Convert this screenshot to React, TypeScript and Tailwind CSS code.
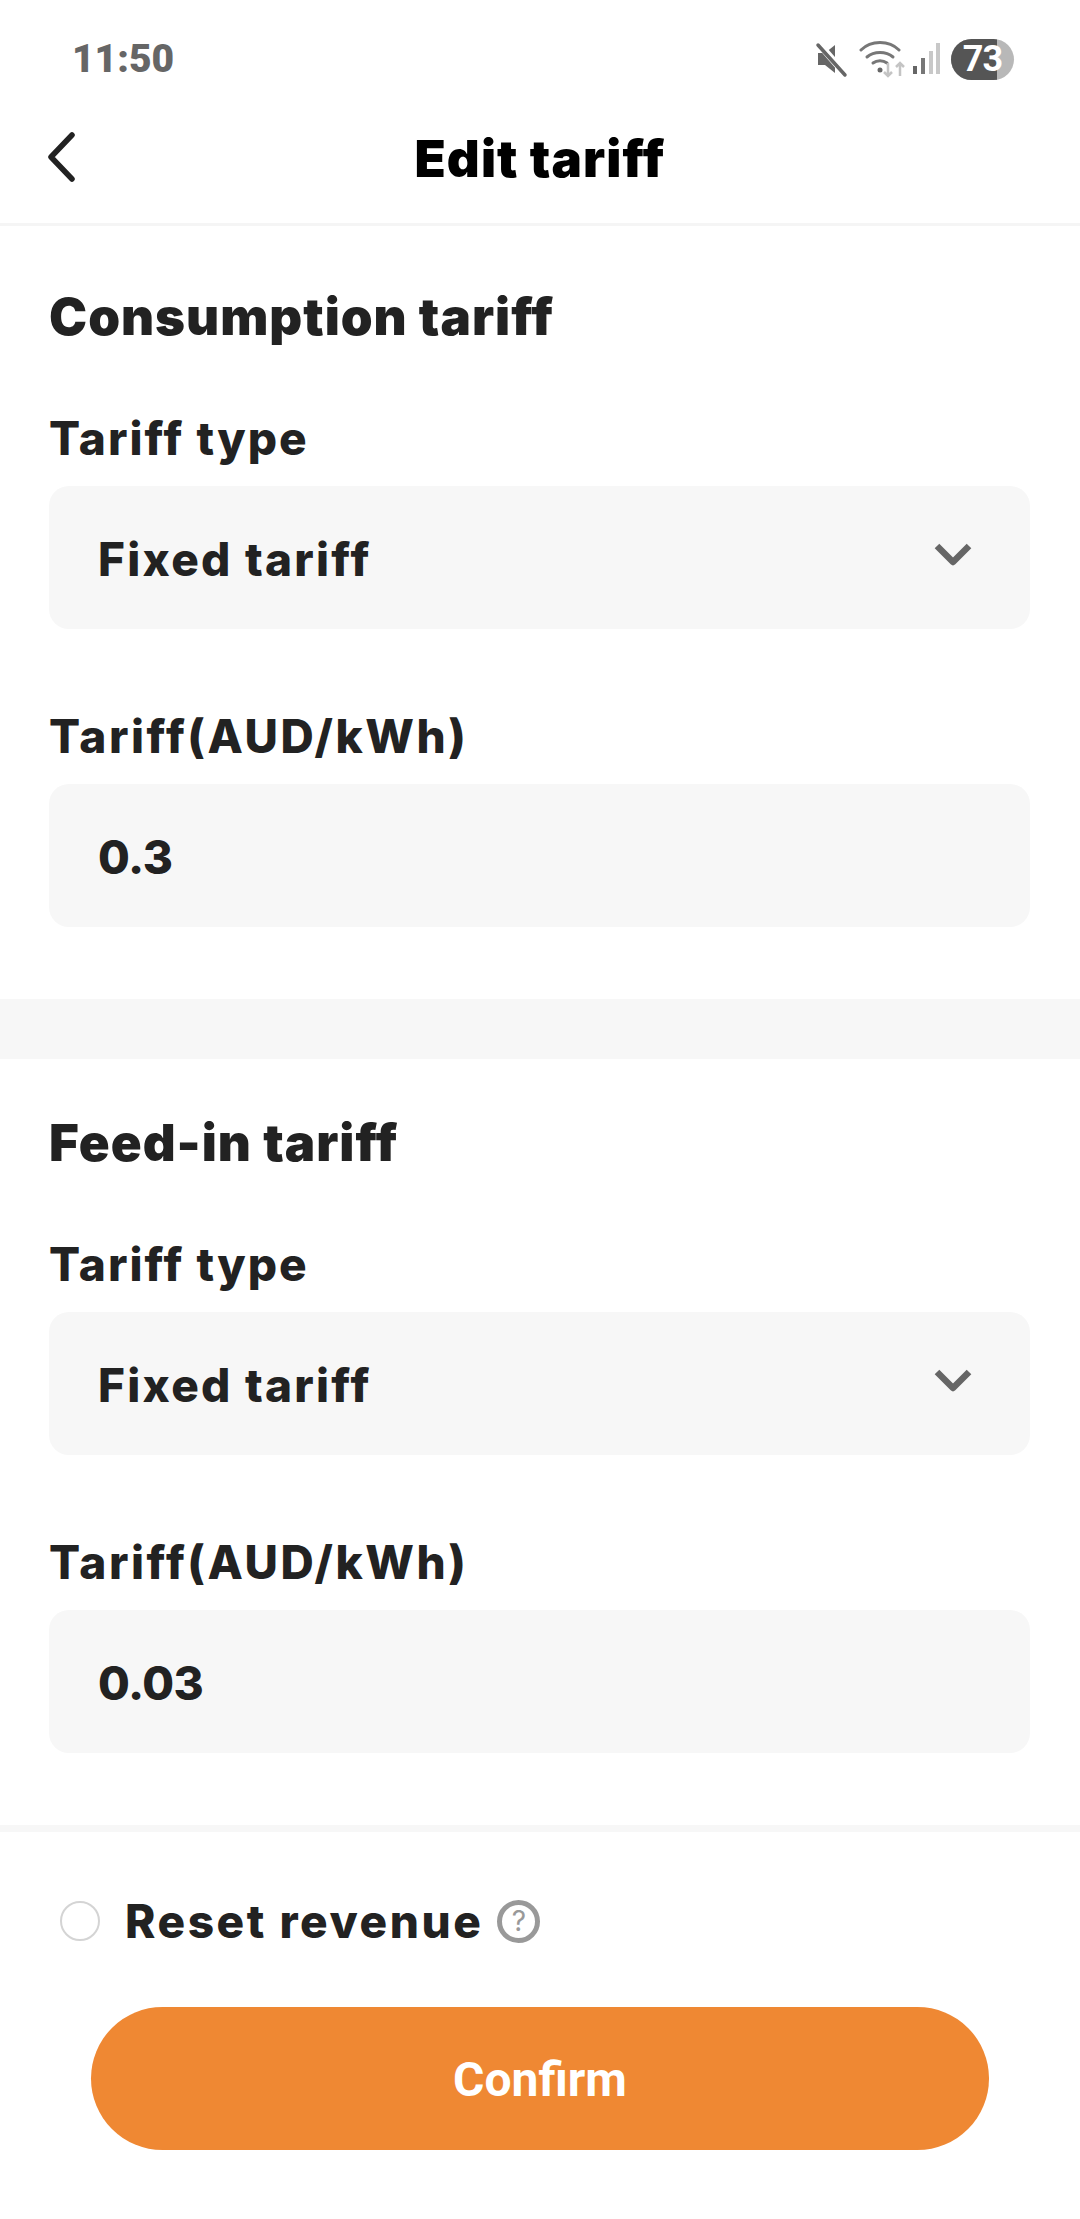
import React from 'react';

const sections = [
  { title: 'Consumption tariff', value: '0.3', top: 'pt-[65px]' },
  { title: 'Feed-in tariff', value: '0.03', top: 'pt-[58px]' },
];

const StatusIcons = () => (
  <div className="flex items-center">
    <svg width="36" height="40" viewBox="0 0 36 40" className="mr-[8px]">
      <path d="M3 14h7l10-8v28l-10-8H3z" fill="#666" />
      <path d="M4 5l27 31" stroke="#fff" strokeWidth="7" />
      <path d="M3 6l27 30" stroke="#666" strokeWidth="3.5" strokeLinecap="round" />
    </svg>
    <svg width="46" height="40" viewBox="0 0 46 40">
      <path d="M2 11C12 1 30 1 40 11" stroke="#777" strokeWidth="3" fill="none" strokeLinecap="round" />
      <path d="M8 18c7-6 19-6 26 0" stroke="#777" strokeWidth="3" fill="none" strokeLinecap="round" />
      <path d="M14 24c4-3 10-3 14 0" stroke="#777" strokeWidth="3" fill="none" strokeLinecap="round" />
      <circle cx="21" cy="31" r="2.5" fill="#666" />
      <path d="M29 24v13M25 33l4 4 4-4" stroke="#c4c4c4" strokeWidth="2.5" fill="none" />
      <path d="M41 37V24M37 28l4-4 4 4" stroke="#c4c4c4" strokeWidth="2.5" fill="none" />
    </svg>
    <svg width="30" height="34" viewBox="0 0 30 34" className="ml-[7px]">
      <rect x="1" y="24" width="4" height="8" fill="#666" />
      <rect x="9" y="16" width="4" height="16" fill="#777" />
      <rect x="17" y="9" width="4" height="23" fill="#c8c8c8" />
      <rect x="24" y="1" width="4" height="31" fill="#c8c8c8" />
    </svg>
    <div className="relative ml-[9px] flex h-[41px] w-[63px] items-center justify-center overflow-hidden rounded-full bg-[#b8b8b8]">
      <div className="absolute inset-y-0 left-0 w-[46px] bg-[#555555]" />
      <span className="relative font-['Roboto',sans-serif] text-[36px] font-bold tracking-[-1px] text-white">73</span>
    </div>
  </div>
);

const Field = ({ label, children, gapTop }: { label: string; children: React.ReactNode; gapTop?: boolean }) => (
  <div className={gapTop ? 'mt-[92px]' : ''}>
    <div className={`mb-[33px] h-[30px] text-[46px] leading-[30px] font-extrabold text-[#222222] ${gapTop ? 'tracking-[2.55px]' : 'tracking-[2.05px]'}`}>
      {label}
    </div>
    <div className="flex h-[143px] items-center justify-between rounded-[20px] bg-[#f7f7f7] pt-[3px] pr-[57px] pl-[49px] text-[46px] font-extrabold text-[#222222]">
      {children}
    </div>
  </div>
);

export default function App() {
  return (
    <div className="flex h-[2219px] w-[1080px] flex-col overflow-hidden bg-white font-['Inter',sans-serif]">
      <div className="flex h-[118px] items-center justify-between pr-[66px] pl-[72px]">
        <span className="font-['Roboto',sans-serif] text-[39px] font-black text-[#666666]">11:50</span>
        <StatusIcons />
      </div>

      <div className="relative flex h-[108px] items-center justify-center border-b-[3px] border-[#f5f5f5] pb-[24px]">
        <svg width="30" height="50" viewBox="0 0 30 50" className="absolute top-[14px] left-[46px]">
          <path d="M26 3L5 25l21 22" stroke="#222" strokeWidth="5.5" fill="none" strokeLinecap="round" strokeLinejoin="round" />
        </svg>
        <h1 className="text-[51px] leading-[60px] font-black tracking-[1.1px] text-black">Edit tariff</h1>
      </div>

      {sections.map((section, index) => (
        <React.Fragment key={section.title}>
          {index > 0 && <div className="h-[60px] bg-[#f7f7f7]" />}
          <section className={`pr-[50px] pb-[72px] pl-[49px] ${section.top}`}>
            <h2 className="mb-[82px] h-[50px] pt-[1px] text-[51px] leading-[50px] font-black tracking-[1px] text-[#222222]">
              {section.title}
            </h2>
            <Field label="Tariff type">
              <span className="tracking-[2.25px]">Fixed tariff</span>
              <svg width="40" height="26" viewBox="0 0 40 26" className="mb-[8px]">
                <path d="M4 4l16 16L36 4" stroke="#666" strokeWidth="6.5" fill="none" strokeLinejoin="round" />
              </svg>
            </Field>
            <Field label="Tariff(AUD/kWh)" gapTop>
              <span className="tracking-[-0.5px]">{section.value}</span>
            </Field>
          </section>
        </React.Fragment>
      ))}

      <div className="h-[7px] bg-[#f7f7f7]" />

      <div className="flex items-center pt-[64px] pl-[60px]">
        <div className="h-[40px] w-[40px] rounded-full border-2 border-[#d4d4d4]" />
        <span className="ml-[25px] text-[46px] leading-[50px] font-extrabold tracking-[2.55px] text-[#222222]">Reset revenue</span>
        <div className="ml-[14px] flex h-[43px] w-[43px] items-center justify-center rounded-full border-[5px] border-[#999999] text-[28px] text-[#999999]">
          ?
        </div>
      </div>

      <button className="mt-[61px] ml-[91px] flex h-[143px] w-[898px] items-center justify-center rounded-full bg-[#ef8833] pt-[2px] font-['Roboto',sans-serif] text-[48px] font-bold text-white">
        Confirm
      </button>
    </div>
  );
}
